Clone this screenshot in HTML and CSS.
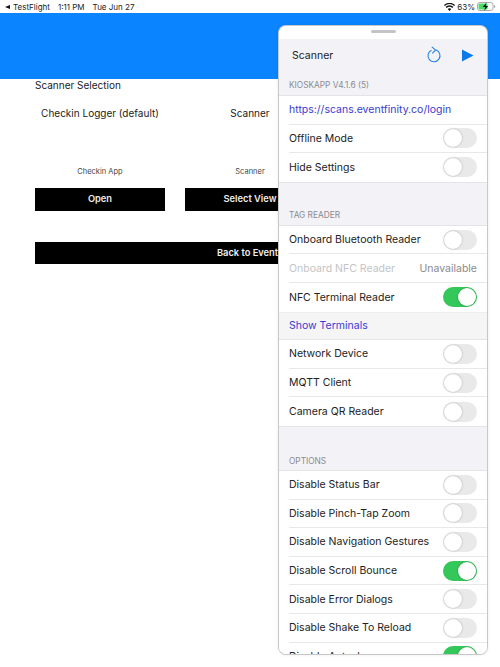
FILE: index.html
```html
<!DOCTYPE html>
<html lang="en">
<head>
<meta charset="utf-8">
<title>Scanner</title>
<link rel="stylesheet" href="styles.css">
</head>
<body>
<div class="status">
  <div class="status-left"><span class="back-arrow"></span><span>TestFlight</span><span class="time">1:11 PM</span><span class="date">Tue Jun 27</span></div>
  <div class="status-right">
    <svg class="wifi" width="11" height="8" viewBox="0 0 11 8"><path d="M5.5 8 3.7 6a2.6 2.6 0 0 1 3.600 0zM2.700 5 1.600 3.800a5.600 5.600 0 0 1 7.800 0L8.300 5a4 4 0 0 0-5.600 0zM.8 3 0 2a8 8 0 0 1 11 0l-.8 1a6.800 6.800 0 0 0-9.400 0z" fill="#111"/></svg>
    <span>63%</span>
    <svg width="19" height="9" viewBox="0 0 19 9"><rect x=".5" y=".5" width="15.500" height="8" rx="2.200" fill="#fff" stroke="#aaa"/><rect x="1.500" y="1.500" width="9" height="6" rx="1" fill="#4cd964"/><path d="M17 3v3c.8-.3 1.300-.8 1.300-1.500S17.800 3.300 17 3z" fill="#aaa"/><path d="M9.500 .5 5.800 5h2.400l-1 3.700L11.200 4H8.700z" fill="#111"/></svg>
  </div>
</div>
<div class="banner"></div>
<main class="content">
  <div class="title">Scanner Selection</div>
  <div class="columns">
    <div class="column"><div class="col-name">Checkin Logger (default)</div><div class="col-sub">Checkin App</div><div class="btn">Open</div></div>
    <div class="column"><div class="col-name">Scanner</div><div class="col-sub">Scanner</div><div class="btn">Select View</div></div>
    <div class="column"></div>
  </div>
  <div class="btn btn-wide">Back to Events</div>
</main>
<aside class="panel">
  <div class="grab"><span class="handle"></span></div>
  <div class="panel-head">
    <span class="panel-title">Scanner</span>
    <svg class="reload" width="16" height="18" viewBox="0 0 16 18"><path d="M5.500 4.300A6 6 0 1 0 10 4.100" fill="none" stroke="#2a84e0" stroke-width="1.100"/><path d="M5.800 .8 9.600 4 6.300 7.400" fill="none" stroke="#2a84e0" stroke-width="1.100"/></svg>
    <svg class="play" width="12" height="13" viewBox="0 0 12 13"><path d="M0 .5 11.500 6.500 0 12.500z" fill="#0a7ae6"/></svg>
  </div>
  <div class="section first">KIOSKAPP V4.1.6 (5)</div>
  <div class="group">
    <div class="row link"><span class="cell">https://scans.eventfinity.co/login</span></div>
    <div class="row"><span class="cell">Offline Mode<i class="toggle"></i></span></div>
    <div class="row last"><span class="cell">Hide Settings<i class="toggle"></i></span></div>
  </div>
  <div class="section">TAG READER</div>
  <div class="group">
    <div class="row"><span class="cell">Onboard Bluetooth Reader<i class="toggle"></i></span></div>
    <div class="row disabled"><span class="cell">Onboard NFC Reader<em class="value">Unavailable</em></span></div>
    <div class="row last"><span class="cell">NFC Terminal Reader<i class="toggle on"></i></span></div>
    <div class="row action"><span class="cell">Show Terminals</span></div>
    <div class="row"><span class="cell">Network Device<i class="toggle"></i></span></div>
    <div class="row"><span class="cell">MQTT Client<i class="toggle"></i></span></div>
    <div class="row last"><span class="cell">Camera QR Reader<i class="toggle"></i></span></div>
  </div>
  <div class="section options">OPTIONS</div>
  <div class="group">
    <div class="row"><span class="cell">Disable Status Bar<i class="toggle"></i></span></div>
    <div class="row"><span class="cell">Disable Pinch-Tap Zoom<i class="toggle"></i></span></div>
    <div class="row"><span class="cell">Disable Navigation Gestures<i class="toggle"></i></span></div>
    <div class="row"><span class="cell">Disable Scroll Bounce<i class="toggle on"></i></span></div>
    <div class="row"><span class="cell">Disable Error Dialogs<i class="toggle"></i></span></div>
    <div class="row"><span class="cell">Disable Shake To Reload<i class="toggle"></i></span></div>
    <div class="row"><span class="cell">Disable Autosleep<i class="toggle on"></i></span></div>
  </div>
</aside>
</body>
</html>
```
FILE: styles.css
```css
* { box-sizing: border-box; }
html, body { margin: 0; height: 100%; }
body {
  position: relative;
  width: 500px;
  height: 667px;
  overflow: hidden;
  background: #fff;
  color: #222;
  font-family: Inter, "Liberation Sans", sans-serif;
}
.status {
  height: 13px;
  display: flex;
  justify-content: space-between;
  align-items: center;
  padding: 0 4px 0 5px;
  font-size: 8px;
  color: #222;
}
.status-left { display: flex; align-items: center; }
.back-arrow {
  width: 0; height: 0;
  margin-right: 3px;
  border-style: solid;
  border-width: 2.500px 5px 2.500px 0;
  border-color: transparent #111 transparent transparent;
}
.time { margin-left: 8px; }
.date { margin-left: 8px; }
.status-right { display: flex; align-items: center; gap: 2px; }
.banner { height: 66px; background: #0a84ff; }
.content { padding: 0 35px; }
.title { font-size: 10px; line-height: 12px; }
.columns {
  display: grid;
  grid-template-columns: repeat(3, 130px);
  gap: 20px;
  margin-top: 15px;
}
.column { display: flex; flex-direction: column; align-items: stretch; text-align: center; }
.col-name { font-size: 10px; line-height: 14px; }
.col-sub { font-size: 7.500px; line-height: 10px; margin-top: 47px; color: #444; }
.btn {
  height: 22.500px;
  background: #000;
  color: #eee;
  font-size: 9.300px;
  font-weight: 600;
  line-height: 22px;
  text-align: center;
  margin-top: 11px;
}
.btn-wide { margin-top: 31px; width: 430px; }
.panel {
  position: absolute;
  left: 279px;
  top: 26px;
  width: 208px;
  height: 628px;
  overflow: hidden;
  background: #f2f2f7;
  border-radius: 7px;
  box-shadow: 0 0 0 1px #c8c8c8, 0 0 4px rgba(0,0,0,.12);
}
.grab { height: 13px; background: #fff; display: flex; justify-content: center; padding-top: 4px; }
.handle { width: 25px; height: 3px; border-radius: 2px; background: #c4c4c6; }
.panel-head {
  height: 32px;
  display: flex;
  align-items: center;
  padding: 0 13px;
  font-size: 10.500px;
  color: #222;
}
.panel-title { flex: 1; }
.reload { margin-right: 20px; }
.section {
  height: 42px;
  padding: 0 10px 5px;
  display: flex;
  align-items: flex-end;
  font-size: 8.300px;
  line-height: 10px;
  color: #8a8a8e;
  background: #f2f2f7;
}
.section.first { height: 24px; }
.section.options { height: 43px; padding-bottom: 4px; }
.group { background: #fff; border-top: 1px solid #e4e4e6; border-bottom: 1px solid #e4e4e6; }
.row { height: 28.600px; padding-left: 10px; font-size: 10.500px; color: #222; }
.cell {
  height: 100%;
  display: flex;
  align-items: center;
  justify-content: space-between;
  padding-right: 10px;
  border-bottom: 1px solid #e8e8ea;
}
.row.last .cell { border-bottom: 0; }
.row.link { color: #3a3ad0; }
.row.disabled { color: #c4c4c6; }
.value { font-style: normal; color: #8a8a8e; }
.row.action { background: #f5f5f6; color: #3a3ad0; border-top: 1px solid #eee; border-bottom: 1px solid #e4e4e6; }
.action .cell { border-bottom: 0; }
.toggle {
  position: relative;
  display: block;
  width: 34px;
  height: 20px;
  border-radius: 10px;
  background: #e9e9ea;
}
.toggle::after {
  content: "";
  position: absolute;
  top: 1px;
  left: 1px;
  width: 18px;
  height: 18px;
  border-radius: 50%;
  background: #fff;
  box-shadow: 0 0 2px rgba(0,0,0,.3);
}
.toggle.on { background: #34c759; }
.toggle.on::after { left: 15px; }
```
